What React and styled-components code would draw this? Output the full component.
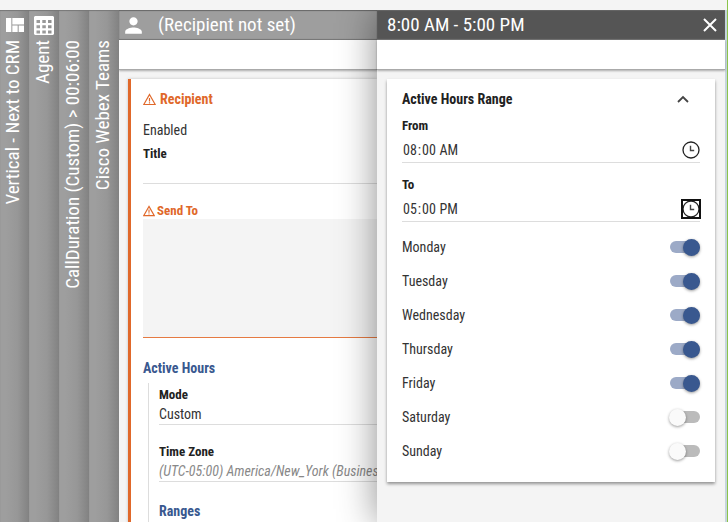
import React, { useState } from 'react';
import styled, { createGlobalStyle } from 'styled-components';
import { MdPerson, MdViewQuilt } from 'react-icons/md';

const GlobalStyle = createGlobalStyle`
  * {
    box-sizing: border-box;
  }
  body {
    margin: 0;
    color: #333;
    background-color: #f4f4f4;
    font-family: 'Roboto Condensed', 'Liberation Sans Narrow', Roboto, sans-serif;
    font-size: 14px;
  }
  button, input, select, textarea {
    font: inherit;
    color: inherit;
  }
`;

const Page = styled.div`
  display: flex;
  flex-direction: column;
  min-height: 100vh;
  padding-top: 10px;
  border-right: 1px solid #8bc34a;
`;

const Columns = styled.div`
  display: flex;
  flex: 1;
  overflow: hidden;
`;

const Sidebar = styled.nav`
  display: grid;
  grid-template-columns: 29px 30px 30px 30px;
`;

const Tab = styled.a`
  display: flex;
  flex-direction: column;
  align-items: center;
  color: white;
  font-size: 19px;
  text-decoration: none;
  background: linear-gradient(to right, #9e9e9e 20%, #979797 60%, #828282);
  box-shadow: inset 0 1px 1px #777;
`;

const TabIcon = styled.span`
  display: flex;
  align-items: center;
  height: 30px;
`;

const TabLabel = styled.span`
  margin-right: 3px;
  writing-mode: vertical-rl;
  transform: rotate(180deg);
  line-height: 26px;
  white-space: nowrap;
`;

const Panel = styled.section`
  flex: 1;
  min-width: 0;
  overflow: hidden;
`;

const Drawer = styled.aside`
  flex: 0 0 350px;
  position: relative;
  background-color: #f4f4f4;
  border-right: 2px solid #c5d5dc;
  box-shadow: 0 0 36px rgba(0, 0, 0, 0.45);
`;

const Header = styled.header`
  display: flex;
  align-items: center;
  height: 30px;
  padding: 0 8px 0 ${(props) => (props.$dark ? '10px' : '2px')};
  color: white;
  background-color: ${(props) => (props.$dark ? '#555' : '#9e9e9e')};
  box-shadow: inset 0 1px 1px #666, inset 0 -1px 1px #777;
`;

const HeaderTitle = styled.h1`
  flex: 1;
  margin: 0;
  padding: 0 0 2px ${(props) => (props.$indent ? '12px' : '0')};
  font-size: 19px;
  font-weight: normal;
  white-space: nowrap;
`;

const Toolbar = styled.div`
  height: 30px;
  background-color: white;
  border-bottom: 1px solid #aaa;
  box-shadow: 0 1px 2px rgba(0, 0, 0, 0.3);
`;

const IconButton = styled.button`
  display: flex;
  padding: 0;
  border: 0;
  background: none;
  cursor: pointer;
`;

const RecipientCard = styled.div`
  margin: 9px 0 0 9px;
  padding: 10px 0 0 12px;
  height: 100%;
  background-color: white;
  border-left: 3px solid #e0682a;
  box-shadow: 0 0 3px rgba(0, 0, 0, 0.2);
`;

const RangeCard = styled.div`
  margin: 9px 10px;
  padding: 10px 15px 14px;
  background-color: white;
  box-shadow: 0 2px 3px rgba(0, 0, 0, 0.4);
`;

const Heading = styled.h2`
  display: flex;
  align-items: center;
  gap: 4px;
  margin: ${(props) => props.$top || '0'} 0 0;
  color: ${(props) => props.$color || '#212121'};
  font-size: 14px;
  line-height: 20px;
`;

const CardTop = styled.div`
  display: flex;
  justify-content: space-between;
  align-items: center;
  padding-right: 11px;
  margin-bottom: 9px;
`;

const Status = styled.p`
  margin: 11px 0 6px;
  line-height: 20px;
`;

const Label = styled.label`
  display: flex;
  align-items: center;
  gap: 2px;
  color: ${(props) => (props.$error ? '#e0682a' : '#212121')};
  font-size: 13px;
  font-weight: bold;
  line-height: 16px;
`;

const Field = styled.div`
  margin-bottom: 19px;
`;

const lineStyle = `
  display: block;
  width: 100%;
  height: 22px;
  padding: 0;
  border: 0;
  border-bottom: 1px solid #ddd;
  border-radius: 0;
  outline: 0;
  background: none;
  appearance: none;
`;

const TextInput = styled.input`
  ${lineStyle}
`;

const Select = styled.select`
  ${lineStyle}
  color: ${(props) => (props.$muted ? '#888' : '#333')};
  font-style: ${(props) => (props.$muted ? 'italic' : 'normal')};
`;

const SendToBox = styled.div`
  border-bottom: 1px solid #e57a42;
`;

const SendTo = styled.textarea`
  display: block;
  width: 100%;
  height: 118px;
  border: 0;
  outline: 0;
  background-color: #f4f4f4;
  resize: none;
`;

const Group = styled.div`
  margin: 5px 0 0 5px;
  padding: 4px 0 0 10px;
  height: 100%;
  border-left: 1px solid #ddd;
`;

const TimeField = styled.div`
  margin-bottom: ${(props) => (props.$last ? '8px' : '14px')};
`;

const TimeRow = styled.div`
  display: flex;
  align-items: center;
  height: 25px;
  margin-top: 4px;
  border-bottom: 1px solid #ddd;
`;

const TimeInput = styled.input`
  flex: 1;
  min-width: 0;
  padding: 0;
  border: 0;
  outline: 0;
  background: none;

  &::-webkit-calendar-picker-indicator {
    display: none;
  }
`;

const ClockButton = styled(IconButton)`
  outline: ${(props) => (props.$active ? '2px solid #111' : 'none')};
  outline-offset: -1px;
`;

const DayRow = styled.label`
  display: flex;
  justify-content: space-between;
  align-items: center;
  height: 34px;
`;

const Switch = styled.input`
  appearance: none;
  display: flex;
  align-items: center;
  width: 30px;
  height: 12px;
  margin: 0;
  border-radius: 6px;
  background-color: #bbb;

  &::before {
    content: '';
    flex: none;
    width: 17px;
    height: 17px;
    margin-left: -1px;
    border-radius: 50%;
    background-color: #fafafa;
    box-shadow: 0 1px 3px rgba(0, 0, 0, 0.4);
  }

  &:checked {
    background-color: #9caac7;
  }

  &:checked::before {
    margin-left: 13px;
    background-color: #39588f;
  }
`;

const GridIcon = () => (
  <svg width='20' height='19' viewBox='0 0 20 19' fill='white'>
    <path
      fillRule='evenodd'
      d='M1 0h18l1 1v17l-1 1H1l-1-1V1zM2.5 4H6v3H2.5zM8.3 4h3.5v3H8.3zM14 4h3.5v3H14zM2.5 9.2H6v3H2.5zM8.3 9.2h3.5v3H8.3zM14 9.2h3.5v3H14zM2.5 14.5H6v3H2.5zM8.3 14.5h3.5v3H8.3zM14 14.5h3.5v3H14z'
    />
  </svg>
);

const WarningIcon = ({ size }) => (
  <svg
    width={size}
    height={size}
    viewBox='0 0 13 13'
    fill='none'
    stroke='#e0682a'
    strokeWidth='1.2'
  >
    <path d='M6.5 1.5 12.2 11.5H.8zM6.5 5v3.4M6.5 9.2v1.2' />
  </svg>
);

const ClockIcon = () => (
  <svg width='18' height='18' viewBox='0 0 18 18' fill='none' stroke='#222'>
    <circle cx='9' cy='9' r='8' strokeWidth='1.3' />
    <path d='M8.5 4.8v4.7h3.7' stroke='#444' strokeWidth='1.4' />
  </svg>
);

const CloseIcon = () => (
  <svg width='14' height='14' viewBox='0 0 14 14' stroke='white' strokeWidth='2'>
    <path d='M1 1l12 12M13 1L1 13' />
  </svg>
);

const ChevronIcon = () => (
  <svg width='12' height='8' viewBox='0 0 12 8' fill='none' stroke='#444' strokeWidth='1.8'>
    <path d='M1 7l5-5 5 5' />
  </svg>
);

const tabs = [
  { label: 'Vertical - Next to CRM', icon: <MdViewQuilt size={24} /> },
  { label: 'Agent', icon: <GridIcon /> },
  { label: 'CallDuration (Custom) > 00:06:00' },
  { label: 'Cisco Webex Teams' },
];

const weekdays = [
  'Monday',
  'Tuesday',
  'Wednesday',
  'Thursday',
  'Friday',
  'Saturday',
  'Sunday',
];

export default function App() {
  const [days, setDays] = useState(weekdays.slice(0, 5));

  const toggle = (day) =>
    setDays(days.includes(day) ? days.filter((d) => d !== day) : [...days, day]);

  return (
    <>
      <GlobalStyle />
      <Page>
        <Columns>
          <Sidebar>
            {tabs.map((tab) => (
              <Tab href='#' key={tab.label}>
                <TabIcon>{tab.icon}</TabIcon>
                <TabLabel>{tab.label}</TabLabel>
              </Tab>
            ))}
          </Sidebar>

          <Panel>
            <Header>
              <MdPerson size={25} />
              <HeaderTitle $indent>(Recipient not set)</HeaderTitle>
            </Header>
            <Toolbar />
            <RecipientCard>
              <Heading $color='#e0682a'>
                <WarningIcon size={13} />
                Recipient
              </Heading>
              <Status>Enabled</Status>
              <Field>
                <Label htmlFor='title'>Title</Label>
                <TextInput id='title' />
              </Field>
              <Label htmlFor='sendTo' $error>
                <WarningIcon size={12} />
                Send To
              </Label>
              <SendToBox>
                <SendTo id='sendTo' />
              </SendToBox>
              <Heading $color='#39588f' $top='20px'>
                Active Hours
              </Heading>
              <Group>
                <Field>
                  <Label htmlFor='mode'>Mode</Label>
                  <Select id='mode'>
                    <option>Custom</option>
                  </Select>
                </Field>
                <Field>
                  <Label htmlFor='zone'>Time Zone</Label>
                  <Select id='zone' $muted>
                    <option>(UTC-05:00) America/New_York (Business)</option>
                  </Select>
                </Field>
                <Heading $color='#39588f'>Ranges</Heading>
              </Group>
            </RecipientCard>
          </Panel>

          <Drawer>
            <Header $dark>
              <HeaderTitle>8:00 AM - 5:00 PM</HeaderTitle>
              <IconButton aria-label='Close'>
                <CloseIcon />
              </IconButton>
            </Header>
            <Toolbar />
            <RangeCard>
              <CardTop>
                <Heading>Active Hours Range</Heading>
                <IconButton aria-label='Collapse'>
                  <ChevronIcon />
                </IconButton>
              </CardTop>
              <TimeField>
                <Label htmlFor='from'>From</Label>
                <TimeRow>
                  <TimeInput id='from' type='time' defaultValue='08:00' />
                  <ClockButton aria-label='Pick start time'>
                    <ClockIcon />
                  </ClockButton>
                </TimeRow>
              </TimeField>
              <TimeField $last>
                <Label htmlFor='to'>To</Label>
                <TimeRow>
                  <TimeInput id='to' type='time' defaultValue='17:00' />
                  <ClockButton aria-label='Pick end time' $active>
                    <ClockIcon />
                  </ClockButton>
                </TimeRow>
              </TimeField>
              {weekdays.map((day) => (
                <DayRow key={day}>
                  {day}
                  <Switch
                    type='checkbox'
                    checked={days.includes(day)}
                    onChange={() => toggle(day)}
                  />
                </DayRow>
              ))}
            </RangeCard>
          </Drawer>
        </Columns>
      </Page>
    </>
  );
}
